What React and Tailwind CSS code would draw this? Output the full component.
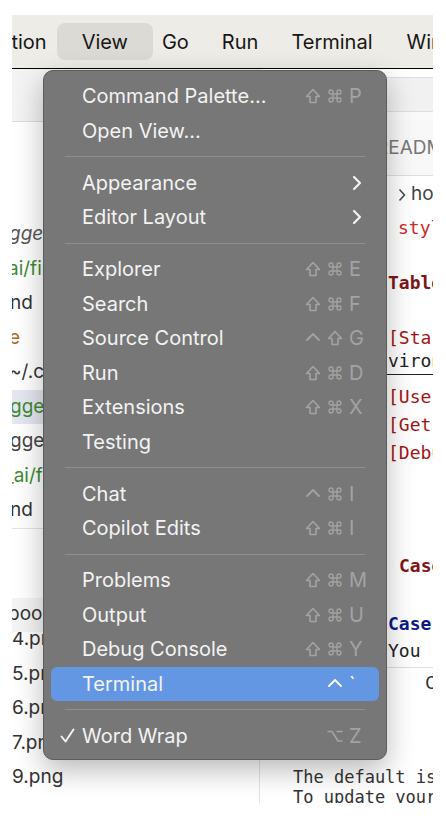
import { Fragment } from 'react';
import { Command } from 'lucide-react';

const sans = "font-['Inter','Noto_Sans',sans-serif]";
const mono = "font-['DejaVu_Sans_Mono','Liberation_Mono',monospace]";

const groups = [
  [
    { label: 'Command Palette…', keys: ['shift', 'cmd', 'P'] },
    { label: 'Open View…' },
  ],
  [
    { label: 'Appearance', sub: true },
    { label: 'Editor Layout', sub: true },
  ],
  [
    { label: 'Explorer', keys: ['shift', 'cmd', 'E'] },
    { label: 'Search', keys: ['shift', 'cmd', 'F'] },
    { label: 'Source Control', keys: ['ctrl', 'shift', 'G'] },
    { label: 'Run', keys: ['shift', 'cmd', 'D'] },
    { label: 'Extensions', keys: ['shift', 'cmd', 'X'] },
    { label: 'Testing' },
  ],
  [
    { label: 'Chat', keys: ['ctrl', 'cmd', 'I'] },
    { label: 'Copilot Edits', keys: ['shift', 'cmd', 'I'] },
  ],
  [
    { label: 'Problems', keys: ['shift', 'cmd', 'M'] },
    { label: 'Output', keys: ['shift', 'cmd', 'U'] },
    { label: 'Debug Console', keys: ['shift', 'cmd', 'Y'] },
    { label: 'Terminal', keys: ['', 'ctrl', '`'], active: true },
  ],
  [{ label: 'Word Wrap', keys: ['', 'opt', 'Z'], checked: true }],
];

function KeyGlyph({ k }) {
  if (k === 'shift')
    return (
      <svg width="16" height="16" viewBox="0 0 16 16">
        <path d="M8 1.5 L14.5 8.5 H11 V14.5 H5 V8.5 H1.5 Z" fill="none" stroke="currentColor" strokeWidth="1.6" strokeLinejoin="round" />
      </svg>
    );
  if (k === 'cmd') return <Command size={16} strokeWidth={2} />;
  if (k === 'ctrl')
    return (
      <svg width="16" height="16" viewBox="0 0 16 16">
        <polyline points="2,10 8,4 14,10" fill="none" stroke="currentColor" strokeWidth="1.8" strokeLinecap="round" strokeLinejoin="round" />
      </svg>
    );
  if (k === 'opt')
    return (
      <svg width="16" height="16" viewBox="0 0 16 16">
        <path d="M1 3.5 H5 L11 13 H15 M10 3.5 H15" fill="none" stroke="currentColor" strokeWidth="1.6" strokeLinecap="round" strokeLinejoin="round" />
      </svg>
    );
  return <span className="text-[20px] leading-none">{k}</span>;
}

function MenuRow({ item }) {
  return (
    <div
      className={
        item.active
          ? 'relative mx-[7px] flex h-[34.5px] items-center rounded-[6px] bg-[#6396e3] pl-[31px] pr-[8px]'
          : 'relative flex h-[34.5px] items-center pl-[38px] pr-[15px]'
      }
    >
      {item.checked && (
        <svg width="15" height="16" viewBox="0 0 15 16" className="absolute left-[16px]">
          <polyline points="1.5,8.5 5.5,13.5 13.5,1.5" fill="none" stroke="#f2f2f2" strokeWidth="2" strokeLinecap="round" strokeLinejoin="round" />
        </svg>
      )}
      <span className="flex-1 text-[20px] text-[#f3f3f3]">{item.label}</span>
      {item.keys && (
        <div className={'flex items-center ' + (item.active ? 'text-white' : 'text-[#a3a3a3]')}>
          {item.keys.map((k, i) => (
            <span key={i} className="flex w-[22px] items-center">
              {k && <KeyGlyph k={k} />}
            </span>
          ))}
        </div>
      )}
      {item.sub && (
        <svg width="10" height="16" viewBox="0 0 10 16" className="mr-[9px]">
          <polyline points="2,2 8,8 2,14" fill="none" stroke="#f2f2f2" strokeWidth="2.2" strokeLinecap="round" strokeLinejoin="round" />
        </svg>
      )}
    </div>
  );
}

function ViewMenu() {
  return (
    <div className="absolute left-[43px] top-[70px] w-[344px] rounded-[10px] border border-[#5c5c5c] bg-[#777777] pt-[8px] pb-[6px] shadow-[0_10px_28px_rgba(0,0,0,0.28)]">
      {groups.map((g, gi) => (
        <Fragment key={gi}>
          {gi > 0 && (
            <div className="flex h-[17.5px] items-center px-[21px]">
              <div className="h-px w-full bg-[#8f8f8f]" />
            </div>
          )}
          {g.map((item) => (
            <MenuRow key={item.label} item={item} />
          ))}
        </Fragment>
      ))}
    </div>
  );
}

const leftRows = [
  { t: 'gge', c: 'text-[#555] italic', ml: '-ml-[3px]' },
  { t: 'ai/fir', c: 'text-[#3f8a34]', ml: '-ml-[4px]' },
  { t: 'nd', c: 'text-[#333]', ml: '-ml-[2px]' },
  { t: 'e', c: 'text-[#b3651c]', ml: '-ml-[3px]' },
  { t: '~/.ca', c: 'text-[#333]', ml: '-ml-[3px]' },
  { t: 'gge', c: 'text-[#3f8a34]', ml: '-ml-[2px]', hl: true },
  { t: 'gge', c: 'text-[#444]', ml: '-ml-[2px]' },
  { t: '_ai/fi', c: 'text-[#3f8a34]', ml: '-ml-[7px]' },
  { t: 'nd', c: 'text-[#333]', ml: '-ml-[2px]' },
];

const files = ['5.png', '6.png', '7.png', '9.png'];

export default function App() {
  return (
    <div className={`relative h-[822px] w-[446px] overflow-hidden bg-white ${sans}`}>
      <div className="pl-[12px] pt-[15px]">
        <div className="flex h-[788px] w-[421px] flex-col overflow-hidden">
          {/* menu bar */}
          <div className="flex h-[54px] shrink-0 items-center border-b border-black bg-[#eeece7] text-[20px] text-[#161616]">
            <span className="-ml-[12px]">ction</span>
            <span className="ml-[10px] flex h-[37px] items-center rounded-[8px] bg-[#dcdad4] px-[25px]">View</span>
            <span className="ml-[9px]">Go</span>
            <span className="ml-[33px]">Run</span>
            <span className="ml-[33px]">Terminal</span>
            <span className="ml-[34px] whitespace-nowrap">Window</span>
          </div>

          <div className="flex flex-1 overflow-hidden">
            {/* explorer side */}
            <div className="flex w-[248px] shrink-0 flex-col overflow-hidden border-r border-[#e3e3e3] text-[19px]">
              <div className="h-[53px] shrink-0 border-b border-[#dcdcdc] bg-[#f3f3f3]" />
              <div className="h-[95px] shrink-0" />
              {leftRows.map((r, i) => (
                <div
                  key={i}
                  className={'flex h-[34.5px] shrink-0 items-center whitespace-nowrap ' + (r.hl ? 'bg-[#e4e6f0]' : '')}
                >
                  <span className={r.ml + ' ' + r.c}>{r.t}</span>
                </div>
              ))}
              <div className="h-px shrink-0 bg-[#e3e3e3]" />
              <div className="h-[69px] shrink-0" />
              <div className="flex h-[34px] shrink-0 items-center bg-[#f4f4f4] text-[#333]">
                <span className="-ml-[4px]">book</span>
              </div>
              <div className="flex h-[25px] shrink-0 items-end overflow-hidden">
                <div className="flex h-[34.5px] shrink-0 items-center text-[#333]">4.png</div>
              </div>
              {files.map((f) => (
                <div key={f} className="flex h-[34.5px] shrink-0 items-center text-[#333]">
                  {f}
                </div>
              ))}
            </div>

            {/* editor side */}
            <div className="flex flex-1 flex-col overflow-hidden whitespace-nowrap">
              <div className="h-[9px] shrink-0 border-b border-[#dedede]" />
              <div className="h-[34px] shrink-0 border-b border-[#dedede] bg-[#f1f1f1]" />
              <div className="h-[9px] shrink-0 bg-[#fafafa]" />
              <div className="flex h-[55px] shrink-0 items-center border-b border-[#dedede] bg-[#f8f8f8] pl-[116px] text-[19px] text-[#777]">
                README.md
              </div>
              <div className={`${mono} text-[18px]`}>
                <div className="flex h-[37px] items-center pl-[138px] font-['Inter',sans-serif] text-[19px] text-[#444]">
                  <svg width="8" height="14" viewBox="0 0 8 14" className="mr-[5px] shrink-0">
                    <polyline points="1.5,1.5 6.5,7 1.5,12.5" fill="none" stroke="#444" strokeWidth="1.5" />
                  </svg>
                  <span className="shrink-0">home</span>
                </div>
                <div className="flex h-[28px] items-center pl-[138px] text-[#d12a2a]">style</div>
                <div className="h-[27px]" />
                <div className="flex h-[28px] items-center pl-[128px] font-bold text-[#7e1515]">Table</div>
                <div className="h-[27px]" />
                <div className="flex h-[28px] items-center pl-[128px] text-[#a31515]">[Start</div>
                <div className="flex h-[24px] items-start border-b border-[#222] pl-[128px] leading-[20px] text-[#222]">viron</div>
                <div className="h-[7px]" />
                <div className="flex h-[28px] items-center pl-[128px] text-[#a31515]">[Use</div>
                <div className="flex h-[28px] items-center pl-[128px] text-[#a31515]">[Get</div>
                <div className="flex h-[28px] items-center pl-[128px] text-[#a31515]">[Debu</div>
                <div className="h-[85px]" />
                <div className="flex h-[28px] items-center pl-[139px] font-bold text-[#7e1515]">Case</div>
                <div className="h-[30px]" />
                <div className="flex h-[28px] items-center pl-[128px] font-bold text-[#0a1a8a]">Case</div>
                <div className="flex h-[26px] items-center pl-[128px] text-[#222]">You</div>
                <div className="h-[5px] border-b border-[#dedede]" />
                <div className="flex h-[28px] items-center pl-[165px] text-[#333]">C</div>
                <div className="h-[72px]" />
                <div className="flex h-[20px] items-center pl-[33px] text-[17px] text-[#333]">The default is</div>
                <div className="flex h-[20px] items-center pl-[33px] text-[17px] text-[#333]">To update your</div>
              </div>
            </div>
          </div>
        </div>
      </div>
      <ViewMenu />
    </div>
  );
}
